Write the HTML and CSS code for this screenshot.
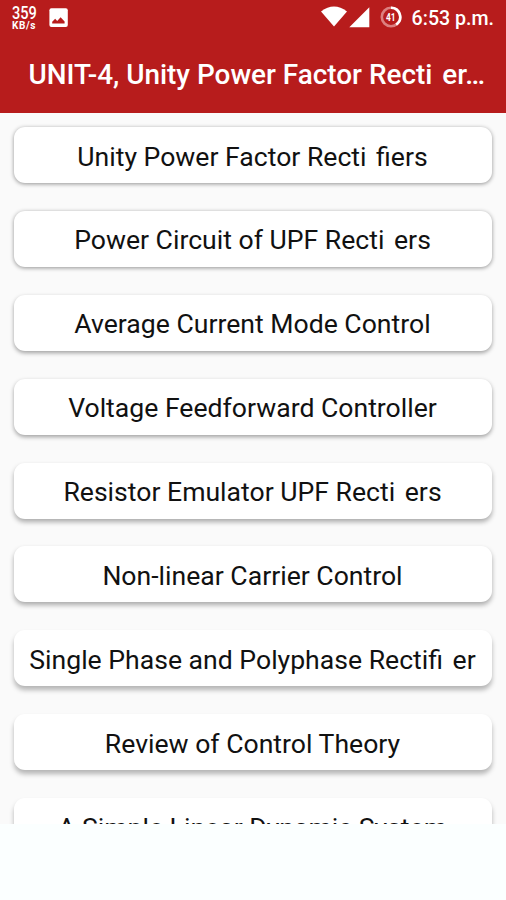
FILE: index.html
```html
<!DOCTYPE html>
<html lang="en">
<head>
    <meta charset="UTF-8">
    <meta name="viewport" content="width=device-width, initial-scale=1.0">
    <title>UNIT-4, Unity Power Factor Rectifiers</title>
    <link rel="stylesheet" href="styles.css">
</head>
<body>
    <header class="app-header">
        <div class="status-bar">
            <div class="net-speed">
                <span class="speed-value">359</span>
                <span class="speed-unit">KB/s</span>
            </div>
            <svg class="icon-image" width="20" height="20" viewBox="0 0 20 20">
                <rect x="0.4" y="0.2" width="18.4" height="18.8" rx="2" fill="#fff"/>
                <path d="M3.2 15.4 V13.8 L6.2 10.8 L8.2 13 L11.6 9.2 L15.6 13.6 V15.4 Z" fill="#b71c1c"/>
            </svg>
            <div class="status-right">
                <svg class="icon-wifi" width="26" height="21" viewBox="0 0 26 21">
                    <path d="M0 5.4 Q13 -4.6 26 5.4 L13 20.6 Z" fill="#fff"/>
                </svg>
                <svg class="icon-signal" width="21" height="21" viewBox="0 0 21 21">
                    <path d="M20.3 0.3 V20.3 H0.3 Z" fill="#fff"/>
                </svg>
                <svg class="icon-battery" width="22" height="22" viewBox="0 0 22 22">
                    <circle cx="11" cy="11" r="9.2" fill="none" stroke="#dc8080" stroke-width="2.6"/>
                    <path d="M11 1.8 A9.2 9.2 0 0 1 16.2 18.6" fill="none" stroke="#fff" stroke-width="2.6"/>
                    <text x="10.7" y="14.8" text-anchor="middle" textLength="9.6" lengthAdjust="spacingAndGlyphs" class="battery-text">41</text>
                </svg>
                <span class="clock">6:53 p.m.</span>
            </div>
        </div>
        <h1 class="title">UNIT-4, Unity Power Factor Recti<span class="gap"> </span>er…</h1>
    </header>

    <main class="topic-list">
        <div class="topic level-1"><span>Unity Power Factor Recti<span class="gap"> </span>fiers</span></div>
        <div class="topic level-1"><span>Power Circuit of UPF Recti<span class="gap"> </span>ers</span></div>
        <div class="topic level-2"><span>Average Current Mode Control</span></div>
        <div class="topic level-2"><span>Voltage Feedforward Controller</span></div>
        <div class="topic level-3"><span>Resistor Emulator UPF Recti<span class="gap"> </span>ers</span></div>
        <div class="topic level-3"><span>Non-linear Carrier Control</span></div>
        <div class="topic level-4"><span>Single Phase and Polyphase Rectifi<span class="gap"> </span>er</span></div>
        <div class="topic level-4"><span>Review of Control Theory</span></div>
        <div class="topic level-4"><span>A Simple Linear Dynamic System</span></div>
    </main>
</body>
</html>
```

FILE: styles.css
```css
body {
    margin: 0;
    height: 900px;
    overflow: hidden;
    background-color: #fbffff;
    font-family: Roboto, sans-serif;
}

/* Header */
.app-header {
    height: 113px;
    background-color: #b71c1c;
    color: #fff;
    overflow: hidden;
}
.status-bar {
    display: flex;
    align-items: flex-start;
    height: 36px;
    padding: 0 12px;
}
.net-speed {
    display: flex;
    flex-direction: column;
    align-items: flex-start;
    width: 26px;
    padding-top: 4px;
    font-weight: 500;
}
.speed-value {
    font-size: 18px;
    line-height: 17px;
    transform: scaleX(0.81);
    transform-origin: left;
}
.speed-unit {
    font-size: 10px;
    line-height: 10px;
    font-weight: 700;
    letter-spacing: 0.6px;
}
.icon-image {
    margin: 8px 0 0 11px;
}
.status-right {
    display: flex;
    margin-left: auto;
}
.icon-wifi {
    margin-top: 6px;
}
.icon-signal {
    margin: 7px 0 0 2px;
}
.icon-battery {
    margin: 6px 0 0 10px;
}
.battery-text {
    font-size: 11px;
    font-weight: 700;
    fill: #fff;
}
.clock {
    margin-left: 10px;
    padding-top: 7px;
    font-size: 19.6px;
    line-height: 23px;
    font-weight: 500;
    white-space: nowrap;
}
.title {
    margin: 23px 0 0 28.5px;
    font-size: 27.9px;
    line-height: 32px;
    font-weight: 500;
    white-space: nowrap;
}
.gap {
    padding-right: 3px;
}

/* Topics */
.topic-list {
    display: flex;
    flex-direction: column;
    gap: 27.9px;
    box-sizing: border-box;
    height: 711px;
    padding: 14px 14.5px 0 13.5px;
    background-color: #fafafa;
    overflow: hidden;
}
.topic {
    display: flex;
    flex-shrink: 0;
    align-items: center;
    justify-content: center;
    box-sizing: border-box;
    height: 56px;
    padding-top: 2px;
    border-radius: 11px;
    background-color: #fff;
    color: #111;
    font-size: 26.6px;
    white-space: nowrap;
}

/* Shadows get deeper down the list */
.level-1 {
    box-shadow: 0 1px 4px rgba(0, 0, 0, 0.42);
}
.level-2 {
    box-shadow: 0 2px 4px rgba(0, 0, 0, 0.36);
}
.level-3 {
    box-shadow: 0 3px 5px rgba(0, 0, 0, 0.32);
}
.level-4 {
    box-shadow: 0 4px 5px rgba(0, 0, 0, 0.28);
}
```
